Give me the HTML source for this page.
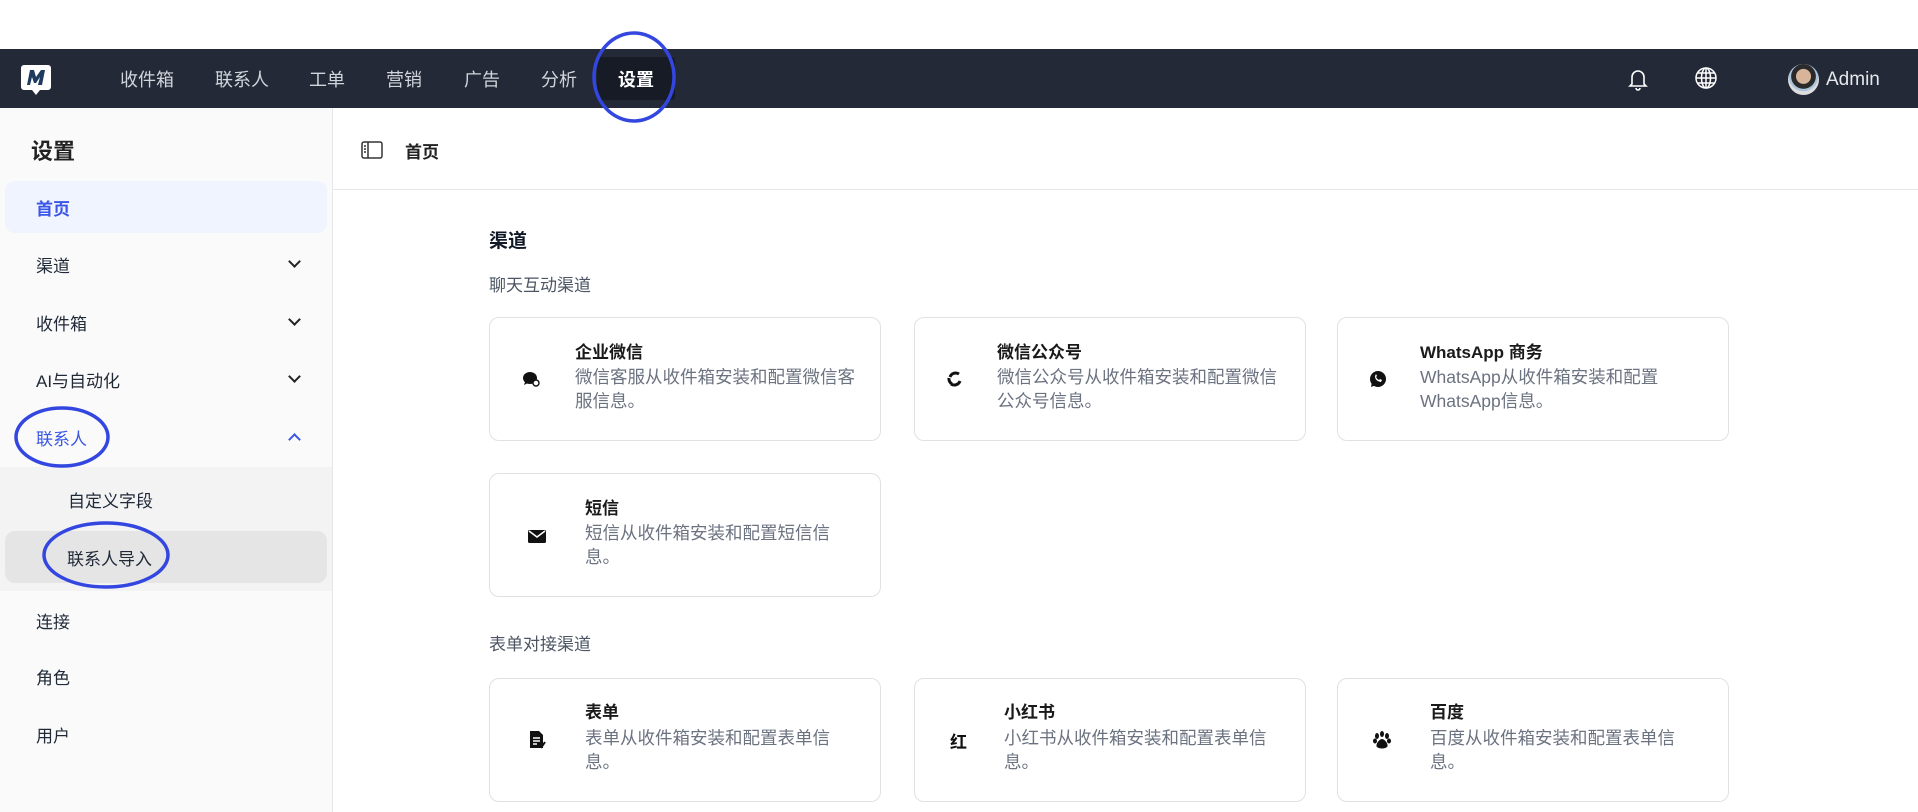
<!DOCTYPE html>
<html><head><meta charset="utf-8"><style>
*{margin:0;padding:0;box-sizing:border-box}
body{width:1918px;height:812px;overflow:hidden;background:#fff;font-family:"Liberation Sans","Noto Sans CJK SC",sans-serif;position:relative;color:#111827}
.a{position:absolute;white-space:nowrap}
.nav{left:0;top:49px;width:1918px;height:59px;background:#232937}
.ni{color:#d1d5db;font-size:18px;top:66px}
.side{left:0;top:108px;width:333px;height:704px;background:#fafafa;border-right:1px solid #e5e7eb}
.si{font-size:17px;color:#1f2937;left:36px}
.chev{left:290px;width:9px;height:9px;border-right:2px solid #222;border-bottom:2px solid #222;transform:rotate(45deg)}
.card{border:1px solid #e0e1e4;border-radius:10px;background:#fff;width:392px;height:124px}
.ct{font-size:17px;font-weight:bold;color:#1a1a1a}
.cd{font-size:17.5px;color:#6b7280;line-height:24px;white-space:normal;width:292px}
.ic{width:20px;height:20px}
</style></head><body>
<div class="a nav"></div>
<svg class="a" style="left:20px;top:62px" width="32" height="34" viewBox="0 0 32 34"><path d="M4 3h24a3 3 0 0 1 3 3v19a3 3 0 0 1-3 3h-8l-4 5-4-5H4a3 3 0 0 1-3-3V6a3 3 0 0 1 3-3z" fill="#fff"/><path d="M7 23l3-15h4l2 7 5-7h4l-3 15h-4l2-8-4 6h-2l-2-6-2 8z" fill="#1e3a5f"/></svg>
<div class="a ni" style="left:120px">收件箱</div>
<div class="a ni" style="left:215px">联系人</div>
<div class="a ni" style="left:309px">工单</div>
<div class="a ni" style="left:386px">营销</div>
<div class="a ni" style="left:464px">广告</div>
<div class="a ni" style="left:541px">分析</div>
<div class="a" style="left:597px;top:57px;width:78px;height:43px;background:#161b26;border-radius:4px"></div>
<div class="a ni" style="left:618px;color:#fff;font-weight:bold">设置</div>
<svg class="a" style="left:1627px;top:67px" width="22" height="24" viewBox="0 0 22 24" fill="none" stroke="#fff" stroke-width="1.6"><path d="M5 17V10a6 6 0 0 1 12 0v7l2 2H3z"/><path d="M9 21a2 2 0 0 0 4 0"/></svg>
<svg class="a" style="left:1694px;top:66px" width="24" height="24" viewBox="0 0 24 24" fill="none" stroke="#fff" stroke-width="1.5"><circle cx="12" cy="12" r="10"/><ellipse cx="12" cy="12" rx="4.5" ry="10"/><path d="M2 12h20M4 7h16M4 17h16M12 2v20"/></svg>
<div class="a" style="left:1788px;top:64px;width:31px;height:31px;border-radius:50%;background:radial-gradient(circle at 50% 40%,#d8b49a 0 30%,#2a2a2a 32% 50%,#a9c4dc 52% 60%,#ddd 62%)"></div>
<div class="a" style="left:1826px;top:69px;font-size:19px;color:#e5e7eb">Admin</div>

<div class="a side"></div>
<div class="a" style="left:31px;top:134px;font-size:22px;font-weight:bold;color:#222">设置</div>
<div class="a" style="left:5px;top:181px;width:322px;height:52px;background:#eff4fe;border-radius:10px"></div>
<div class="a si" style="top:195px;color:#3b55e6;font-weight:bold">首页</div>
<div class="a si" style="top:252px">渠道</div><div class="a chev" style="top:257px"></div>
<div class="a si" style="top:310px">收件箱</div><div class="a chev" style="top:315px"></div>
<div class="a si" style="top:367px">AI与自动化</div><div class="a chev" style="top:372px"></div>
<div class="a si" style="top:425px;color:#3b55e6">联系人</div><div class="a chev" style="top:435px;border-color:#3b55e6;transform:rotate(225deg)"></div>
<div class="a" style="left:0;top:467px;width:332px;height:124px;background:#f3f3f3"></div>
<div class="a" style="left:5px;top:531px;width:322px;height:52px;background:#e5e5e5;border-radius:10px"></div>
<div class="a si" style="top:487px;left:68px">自定义字段</div>
<div class="a si" style="top:545px;left:67px">联系人导入</div>
<div class="a si" style="top:608px">连接</div>
<div class="a si" style="top:664px">角色</div>
<div class="a si" style="top:722px">用户</div>

<div class="a" style="left:333px;top:189px;width:1585px;height:1px;background:#e5e7eb"></div>
<svg class="a" style="left:361px;top:141px" width="22" height="18" viewBox="0 0 22 18" fill="none" stroke="#333" stroke-width="1.5"><rect x="1" y="1" width="20" height="16" rx="2"/><path d="M7 1v16M3 5h2M3 8h2M3 11h2"/></svg>
<div class="a" style="left:405px;top:138px;font-size:17px;font-weight:bold;color:#222">首页</div>

<div class="a" style="left:489px;top:226px;font-size:19px;font-weight:bold">渠道</div>
<div class="a" style="left:489px;top:271px;font-size:17px;color:#4b5563">聊天互动渠道</div>
<div class="a" style="left:489px;top:630px;font-size:17px;color:#4b5563">表单对接渠道</div>

<div class="a card" style="left:489px;top:317px"></div>
<div class="a card" style="left:914px;top:317px"></div>
<div class="a card" style="left:1337px;top:317px"></div>
<div class="a card" style="left:489px;top:473px"></div>
<div class="a card" style="left:489px;top:678px"></div>
<div class="a card" style="left:914px;top:678px"></div>
<div class="a card" style="left:1337px;top:678px"></div>

<svg class="a ic" style="left:521px;top:369px" viewBox="0 0 20 20"><ellipse cx="9" cy="9" rx="7" ry="6" fill="#111"/><path d="M4 13l-1 3 4-2z" fill="#111"/><circle cx="15" cy="14" r="3" fill="#fff" stroke="#111" stroke-width="1.4"/></svg>
<div class="a ct" style="left:575px;top:338px">企业微信</div>
<div class="a cd" style="left:575px;top:365px">微信客服从收件箱安装和配置微信客服信息。</div>

<svg class="a ic" style="left:945px;top:369px" viewBox="0 0 20 20" fill="none" stroke="#111" stroke-width="3"><path d="M5 8a6 6 0 0 1 9-3M15 12a6 6 0 0 1-9 3M7 15a6 6 0 0 1-3-6"/></svg>
<div class="a ct" style="left:997px;top:338px">微信公众号</div>
<div class="a cd" style="left:997px;top:365px">微信公众号从收件箱安装和配置微信公众号信息。</div>

<svg class="a ic" style="left:1368px;top:369px" viewBox="0 0 20 20"><circle cx="10" cy="10" r="8" fill="#111"/><path d="M3 18l1-5 4 3z" fill="#111"/><path d="M7 7q0 5 6 6l1-2-2-1-1 1q-2-1-3-3l1-1-1-2z" fill="#fff"/></svg>
<div class="a ct" style="left:1420px;top:338px">WhatsApp 商务</div>
<div class="a cd" style="left:1420px;top:365px;width:270px">WhatsApp从收件箱安装和配置WhatsApp信息。</div>

<svg class="a ic" style="left:527px;top:526px" viewBox="0 0 20 20"><rect x="1" y="4" width="18" height="13" rx="1.5" fill="#111"/><path d="M2 5l8 6 8-6" stroke="#fff" stroke-width="1.5" fill="none"/></svg>
<div class="a ct" style="left:585px;top:494px">短信</div>
<div class="a cd" style="left:585px;top:521px;width:272px">短信从收件箱安装和配置短信信息。</div>

<svg class="a ic" style="left:527px;top:730px" viewBox="0 0 20 20"><path d="M3 1h9l4 4v13H3z" fill="#111"/><path d="M6 8h7M6 11h7M6 14h4" stroke="#fff" stroke-width="1.4"/><path d="M14 18l4-6" stroke="#111" stroke-width="2"/></svg>
<div class="a ct" style="left:585px;top:698px">表单</div>
<div class="a cd" style="left:585px;top:726px;width:272px">表单从收件箱安装和配置表单信息。</div>

<div class="a" style="left:950px;top:728px;font-size:17px;font-weight:bold;color:#111">红</div>
<div class="a ct" style="left:1004px;top:698px">小红书</div>
<div class="a cd" style="left:1004px;top:726px;width:292px">小红书从收件箱安装和配置表单信息。</div>

<svg class="a ic" style="left:1372px;top:730px" viewBox="0 0 20 20" fill="#111"><ellipse cx="5" cy="6" rx="2" ry="3"/><ellipse cx="10" cy="4" rx="2" ry="3"/><ellipse cx="15" cy="6" rx="2" ry="3"/><ellipse cx="3" cy="11" rx="2" ry="2.5"/><ellipse cx="17" cy="11" rx="2" ry="2.5"/><path d="M10 9c-3 0-7 6-5 8s8 2 10 0-2-8-5-8z"/></svg>
<div class="a ct" style="left:1430px;top:698px">百度</div>
<div class="a cd" style="left:1430px;top:726px;width:272px">百度从收件箱安装和配置表单信息。</div>

<svg class="a" style="left:0;top:0" width="1918" height="812" fill="none" stroke="#3347e0" stroke-width="3.5">
<ellipse cx="634" cy="77" rx="40" ry="44"/>
<ellipse cx="62" cy="437" rx="46" ry="29"/>
<ellipse cx="106" cy="555" rx="62" ry="32"/>
</svg>
</body></html>
